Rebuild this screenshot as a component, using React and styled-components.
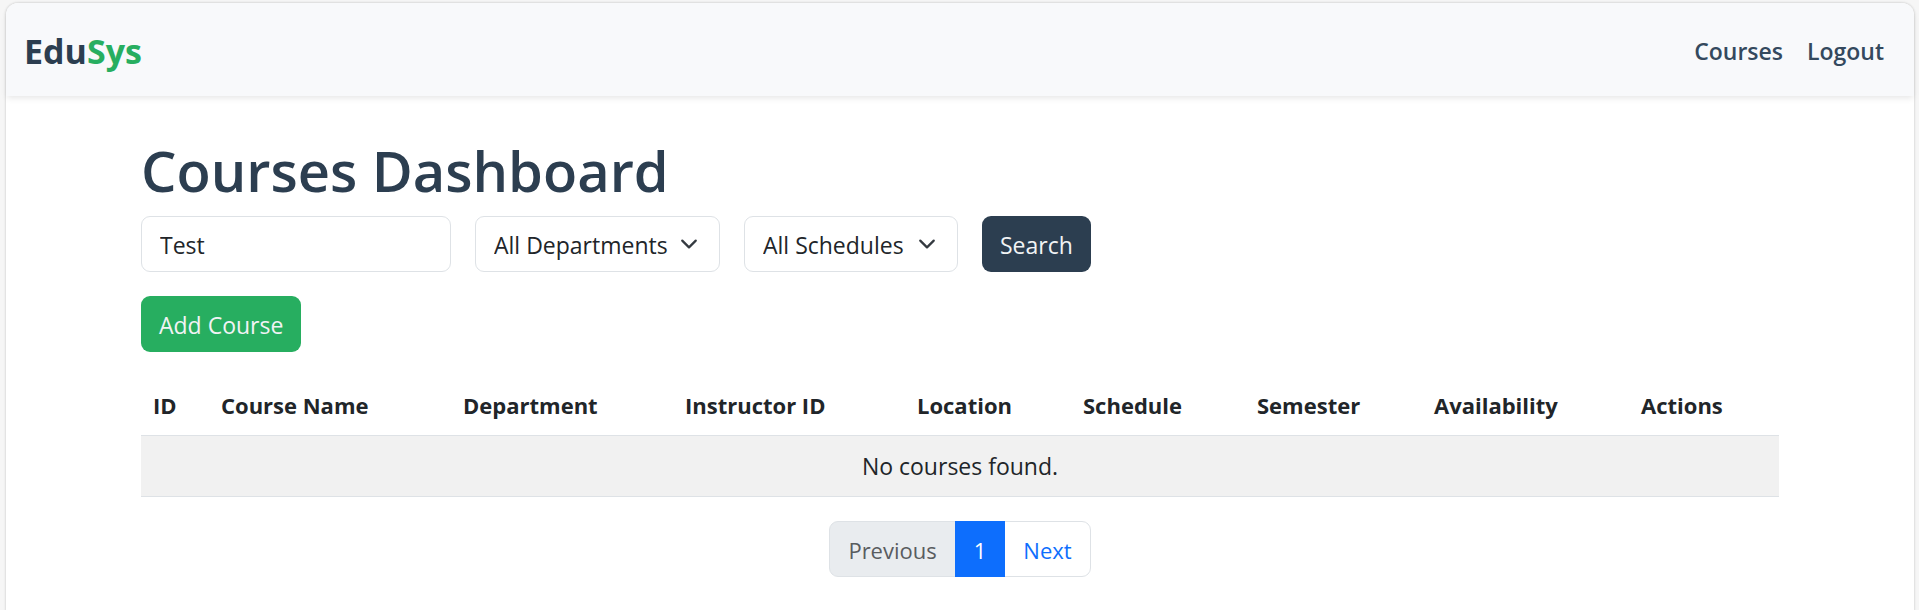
import React, { useState } from "react";
import styled, { createGlobalStyle } from "styled-components";

const GlobalStyle = createGlobalStyle`
  *, *::before, *::after { box-sizing: border-box; }
  html { background: #f6f6f6; }
  body {
    margin: 0;
    padding: 3px 5px 0 6px;
    color: #212529;
    font-family: "Segoe UI", "Open Sans", "Noto Sans", sans-serif;
    font-size: 23px;
    line-height: 36px;
  }
  button, input, select { font: inherit; }
`;

const Window = styled.div`
  display: flex;
  flex-direction: column;
  min-height: calc(100vh - 3px);
  background: #fff;
  border-radius: 12px 12px 0 0;
  box-shadow: 0 0 2px 1px rgba(0, 0, 0, 0.1);
`;

const Navbar = styled.nav`
  display: flex;
  align-items: center;
  justify-content: space-between;
  padding: 21px 30px 18px 18px;
  background: #f8f9fb;
  border-radius: 12px 12px 0 0;
  box-shadow: 0 3px 6px -1px rgba(0, 0, 0, 0.1);
`;

const Brand = styled.a`
  color: #2c3e50;
  font-size: 34px;
  line-height: 54px;
  font-weight: 700;
  text-decoration: none;
`;

const BrandAccent = styled.span`
  color: #27ae60;
`;

const NavLinks = styled.div`
  display: flex;
  gap: 24px;
`;

const NavLink = styled.a`
  color: #34495e;
  font-weight: 600;
  text-decoration: none;
`;

const Container = styled.main`
  width: 100%;
  max-width: 1710px;
  margin: 0 auto;
  padding: 38px 36px 0;
`;

const Title = styled.h1`
  margin: 0 0 10px;
  color: #2c3e50;
  font-size: 56px;
  line-height: 72px;
  font-weight: 600;
`;

const Filters = styled.form`
  display: flex;
  flex-wrap: wrap;
  gap: 24px;
  margin-bottom: 24px;
`;

const SearchInput = styled.input`
  width: 310px;
  height: 56px;
  padding: 1px 18px 0;
  color: #212529;
  background: #fff;
  border: 1px solid #dee2e6;
  border-radius: 9px;
`;

const SelectBox = styled.div`
  display: grid;
  align-items: center;
  width: ${({ $width }) => $width};

  & > * { grid-area: 1 / 1; }
`;

const Select = styled.select`
  width: 100%;
  height: 56px;
  padding: 1px 18px 0;
  color: #212529;
  background: #fff;
  border: 1px solid #dee2e6;
  border-radius: 9px;
  appearance: none;
`;

const Chevron = styled.svg`
  justify-self: end;
  margin-right: 22px;
  pointer-events: none;
`;

const Button = styled.button`
  height: 56px;
  padding: 1px 18px 0;
  color: #f1f3f5;
  background: ${({ $tone }) => ($tone === "success" ? "#27ae60" : "#2c3e50")};
  border: 0;
  border-radius: 9px;
`;

const Table = styled.table`
  width: 100%;
  margin: 23px 0 24px;
  table-layout: fixed;
  border-collapse: collapse;

  th, td {
    padding: 12px;
    border-bottom: 1px solid #dee2e6;
  }
  th { text-align: left; font-size: 22px; font-weight: 700; white-space: nowrap; }
  td { text-align: center; background: #f1f1f1; }
`;

const Column = styled.col`
  width: ${({ $width }) => $width}px;
`;

const Pagination = styled.nav`
  display: flex;
  justify-content: center;
`;

const PageButton = styled.button`
  height: 56px;
  padding: 1px 18px 0;
  color: #0d6efd;
  background: #fff;
  border: 1px solid #dee2e6;
  font-size: 22px;
  margin-left: -1px;

  &:first-child { border-radius: 9px 0 0 9px; margin-left: 0; }
  &:last-child { border-radius: 0 9px 9px 0; }
  &:disabled { color: #595c5f; background: #e9ecef; }
  &[aria-current="page"] {
    position: relative;
    color: #fff;
    background: #0d6efd;
    border-color: #0d6efd;
  }
`;

const columns = [
  { label: "ID", width: 68 },
  { label: "Course Name", width: 242 },
  { label: "Department", width: 222 },
  { label: "Instructor ID", width: 232 },
  { label: "Location", width: 166 },
  { label: "Schedule", width: 174 },
  { label: "Semester", width: 177 },
  { label: "Availability", width: 207 },
  { label: "Actions", width: 150 },
];

function Dropdown({ label, option, width }) {
  return (
    <SelectBox $width={width}>
      <Select aria-label={label}>
        <option>{option}</option>
      </Select>
      <Chevron width="18" height="18" viewBox="0 0 16 16" fill="none" aria-hidden="true">
        <path d="m2 5 6 6 6-6" stroke="#343a40" strokeWidth="2" strokeLinecap="round" strokeLinejoin="round" />
      </Chevron>
    </SelectBox>
  );
}

export default function App() {
  const [query, setQuery] = useState("Test");

  return (
    <>
      <GlobalStyle />
      <Window>
        <Navbar>
          <Brand href="#">Edu<BrandAccent>Sys</BrandAccent></Brand>
          <NavLinks>
            <NavLink href="#courses">Courses</NavLink>
            <NavLink href="#logout">Logout</NavLink>
          </NavLinks>
        </Navbar>
        <Container>
          <Title>Courses Dashboard</Title>
          <Filters onSubmit={(event) => event.preventDefault()}>
            <SearchInput
              type="text"
              aria-label="Search courses"
              value={query}
              onChange={(event) => setQuery(event.target.value)}
            />
            <Dropdown label="Department" option="All Departments" width="245px" />
            <Dropdown label="Schedule" option="All Schedules" width="214px" />
            <Button type="submit">Search</Button>
          </Filters>
          <Button type="button" $tone="success">Add Course</Button>
          <Table>
            <colgroup>
              {columns.map(({ label, width }) => <Column key={label} $width={width} />)}
            </colgroup>
            <thead>
              <tr>
                {columns.map(({ label }) => <th key={label} scope="col">{label}</th>)}
              </tr>
            </thead>
            <tbody>
              <tr>
                <td colSpan={columns.length}>No courses found.</td>
              </tr>
            </tbody>
          </Table>
          <Pagination aria-label="Course pages">
            <PageButton type="button" disabled>Previous</PageButton>
            <PageButton type="button" aria-current="page">1</PageButton>
            <PageButton type="button">Next</PageButton>
          </Pagination>
        </Container>
      </Window>
    </>
  );
}
